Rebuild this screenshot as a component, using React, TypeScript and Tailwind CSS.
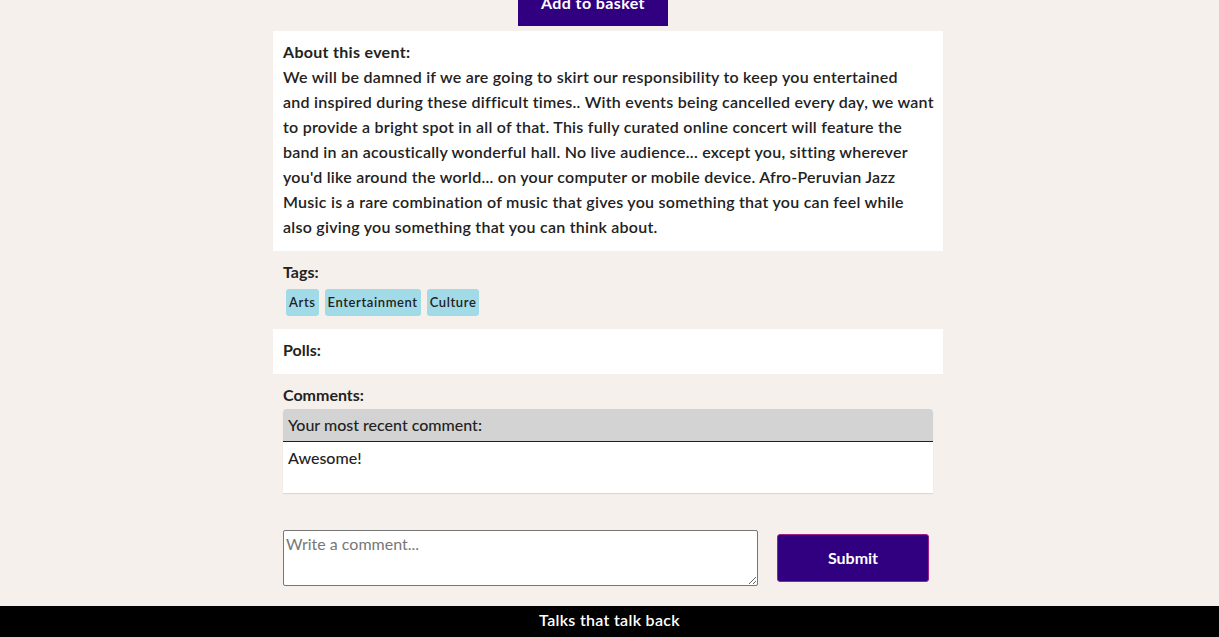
import React from "react";

const body = { fontFamily: "Lato, 'Noto Sans', sans-serif" };
const cond = { fontFamily: "Lato, 'Liberation Sans', sans-serif" };

const lines = [
  "We will be damned if we are going to skirt our responsibility to keep you entertained",
  "and inspired during these difficult times.. With events being cancelled every day, we want",
  "to provide a bright spot in all of that. This fully curated online concert will feature the",
  "band in an acoustically wonderful hall. No live audience... except you, sitting wherever",
  "you'd like around the world... on your computer or mobile device. Afro-Peruvian Jazz",
  "Music is a rare combination of music that gives you something that you can feel while",
  "also giving you something that you can think about.",
];

export default function App() {
  return (
    <div className="min-h-[637px] w-full bg-[#f5f0ec] flex flex-col text-[#222]" style={body}>
      <div className="w-[670px] ml-[273px] flex flex-col">
        <div className="flex">
          <div className="ml-[245px] w-[150px] h-[26px] bg-[#310080] text-white font-bold text-[16px] tracking-[0.4px] flex items-end justify-center pb-[15px] leading-none overflow-hidden">
            Add to basket
          </div>
        </div>
        <div className="mt-[5px] bg-white px-[10px] pt-[8px] pb-[12px] text-[16px] leading-[25px] font-semibold tracking-[0.25px]">
          <div className="font-bold tracking-[0.3px]">About this event:</div>
          <p>
            {lines.map((l, i) => (
              <span key={i} className="block whitespace-nowrap">
                {l}
              </span>
            ))}
          </p>
        </div>
        <div className="px-[10px] pt-[11px] pb-[13px]">
          <div className="font-bold text-[16px] leading-[20px]">Tags:</div>
          <div className="flex gap-[6px] mt-[7px] ml-[3px]">
            {["Arts", "Entertainment", "Culture"].map((t) => (
              <span key={t} className="bg-[#a2dbe8] rounded-[3px] h-[27px] px-[3px] flex items-center text-[13px] font-semibold tracking-[0.6px]">
                {t}
              </span>
            ))}
          </div>
        </div>
        <div className="bg-white h-[45px] px-[10px] pb-[3px] flex items-center font-bold text-[16px]">Polls:</div>
        <div className="px-[10px] pt-[11px]">
          <div className="font-bold text-[16px] leading-[20px]" style={cond}>Comments:</div>
          <div className="mt-[4px] rounded-t-[4px] overflow-hidden shadow-[0_1px_1px_rgba(0,0,0,0.12)]" style={cond}>
            <div className="bg-[#d3d3d3] h-[33px] border-b border-[#2a1050] px-[5px] flex items-center text-[16px] font-medium">
              Your most recent comment:
            </div>
            <div className="bg-white h-[51px] px-[5px] pt-[4px] text-[16px] font-medium">Awesome!</div>
          </div>
          <div className="mt-[37px] flex items-center gap-[19px] pb-[20px]">
            <textarea
              placeholder="Write a comment..."
              className="w-[475px] h-[56px] bg-white border border-[#767676] rounded-[2px] px-[2px] py-[1px] text-[16px] placeholder:text-[#777] resize-y"
              style={cond}
            />
            <button className="w-[152px] h-[48px] bg-[#310080] border border-[#a0208a] rounded-[3px] text-white font-bold text-[16px]" style={cond}>
              Submit
            </button>
          </div>
        </div>
      </div>
      <div className="mt-auto h-[31px] bg-black text-white flex items-center justify-center pb-[4px] text-[16px] font-semibold tracking-[0.3px]" style={cond}>
        Talks that talk back
      </div>
    </div>
  );
}
